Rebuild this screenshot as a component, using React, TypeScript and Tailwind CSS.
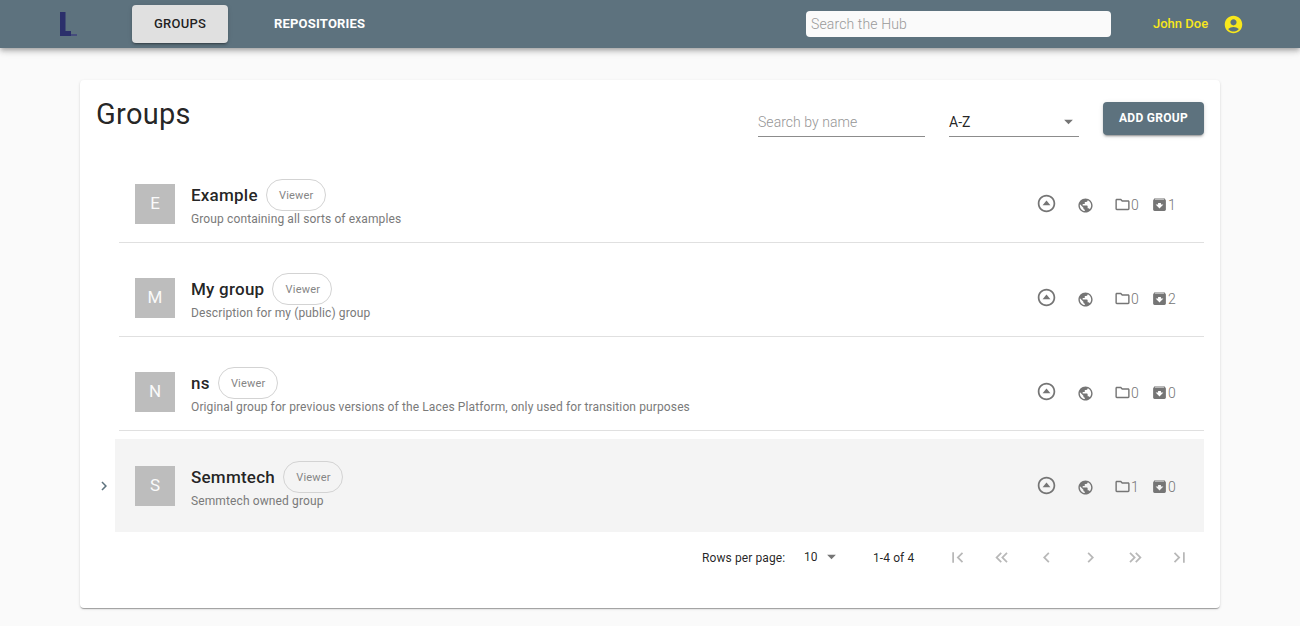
import { type ReactNode } from 'react';
import clsx from 'clsx';
import {
    MdAccountCircle,
    MdArchive,
    MdArrowDropDown,
    MdChevronLeft,
    MdChevronRight,
    MdFirstPage,
    MdKeyboardDoubleArrowLeft,
    MdKeyboardDoubleArrowRight,
    MdLastPage,
    MdPublic,
} from 'react-icons/md';

interface Group {
    name: string;
    description: string;
    subgroups: number;
    repositories: number;
    expandable?: boolean;
}

const groups: Group[] = [
    { name: 'Example', description: 'Group containing all sorts of examples', subgroups: 0, repositories: 1 },
    { name: 'My group', description: 'Description for my (public) group', subgroups: 0, repositories: 2 },
    {
        name: 'ns',
        description: 'Original group for previous versions of the Laces Platform, only used for transition purposes',
        subgroups: 0,
        repositories: 0,
    },
    { name: 'Semmtech', description: 'Semmtech owned group', subgroups: 1, repositories: 0, expandable: true },
];

function Logo() {
    return (
        <svg className="ml-[60px] h-6 w-[17px]" viewBox="0 0 17 24">
            <path d="M0 0h5.500v19h5.500v5H0z" fill="#2b2f6b" />
            <path d="M11 22h6v2h-6z" fill="#454c7c" />
        </svg>
    );
}

function Header() {
    return (
        <header className="relative flex h-12 items-center bg-[#5d727e] shadow-[0_2px_4px_-1px_rgba(0,0,0,0.2),0_4px_5px_0_rgba(0,0,0,0.14),0_1px_10px_0_rgba(0,0,0,0.12)]">
            <Logo />
            <button className="ml-[55px] h-[38px] w-24 rounded bg-[#e0e0e0] text-[13px] font-medium tracking-[0.25px] text-black/87 shadow-[0_3px_1px_-2px_rgba(0,0,0,0.2),0_2px_2px_0_rgba(0,0,0,0.14),0_1px_5px_0_rgba(0,0,0,0.12)]">
                GROUPS
            </button>
            <button className="ml-[46px] text-[13px] font-bold tracking-[0.2px] text-white">REPOSITORIES</button>
            <input
                className="ml-auto h-[26px] w-[305px] rounded bg-[#fafafa] px-[5px] text-sm font-light tracking-[0.13px] placeholder:text-[#999]"
                placeholder="Search the Hub"
            />
            <span className="ml-[42px] w-[70px] whitespace-nowrap text-[13px] font-medium text-[#f8e71c]">John Doe</span>
            <MdAccountCircle className="mr-14 h-[21px] w-[21px] text-[#f8e71c]" />
        </header>
    );
}

function Toolbar() {
    return (
        <div className="flex h-[70px] items-start pl-4 pr-4">
            <h1 className="mt-3.5 text-[29px] leading-10 tracking-[0.3px] text-black/87">Groups</h1>
            <input
                className="ml-auto mt-[27px] h-[30px] w-[167px] border-b border-[#8c8c8c] text-sm font-light tracking-[0.05px] placeholder:text-[#959595]"
                placeholder="Search by name"
            />
            <div className="ml-6 mt-[27px] flex h-[30px] w-[130px] items-center justify-between border-b border-[#8c8c8c] text-sm text-black/87">
                A-Z
                <MdArrowDropDown className="h-[21px] w-[21px] text-[#757575]" />
            </div>
            <button className="ml-6 mt-[22px] h-[33px] w-[101px] rounded bg-[#5d727e] pb-0.5 text-xs font-bold tracking-[0.3px] text-white shadow-[0_3px_1px_-2px_rgba(0,0,0,0.2),0_2px_2px_0_rgba(0,0,0,0.14),0_1px_5px_0_rgba(0,0,0,0.12)]">
                ADD GROUP
            </button>
        </div>
    );
}

function RoleIcon() {
    return (
        <svg className="mb-px h-[21px] w-[21px]" viewBox="0 0 24 24" fill="currentColor">
            <path d="M12 4c4.41 0 8 3.59 8 8s-3.59 8-8 8-8-3.59-8-8 3.59-8 8-8m0-2C6.48 2 2 6.48 2 12s4.48 10 10 10 10-4.48 10-10S17.52 2 12 2z" />
            <path d="M7.5 14l4.5-5.5 4.5 5.5z" />
        </svg>
    );
}

function FolderIcon() {
    return (
        <svg className="ml-5 h-[17px] w-[17px]" viewBox="0 0 24 24" fill="currentColor">
            <path d="M20 6h-8l-2-2H4c-1.1 0-1.99.9-1.99 2L2 18c0 1.1.9 2 2 2h16c1.1 0 2-.9 2-2V8c0-1.100-.9-2-2-2zm0 12H4V6h5.200l2 2H20v10z" />
        </svg>
    );
}

function GroupRow({ group }: { group: Group }) {
    return (
        <div className={clsx('flex', group.expandable && 'mt-[7px]')}>
            <div className="flex w-[35px] shrink-0 items-center justify-end">
                {group.expandable && <MdChevronRight className="mr-0.5 h-[18px] w-[18px] text-[#5d727e]" />}
            </div>
            <div
                className={clsx(
                    'mr-4 flex h-[93px] min-w-0 flex-1 items-start',
                    group.expandable ? 'bg-[#f4f4f4] pl-5 pt-[19px]' : 'ml-1 mb-px border-b border-[#e0e0e0] pl-4 pt-[26px]'
                )}
            >
                <div className="mt-2 flex h-10 w-10 items-center justify-center bg-[#bdbdbd] pb-px text-[17px] text-[#fafafa]">
                    {group.name[0].toUpperCase()}
                </div>
                <div className="ml-4">
                    <div className="mt-[3px] flex h-8 items-center gap-2">
                        <span className="pt-0.5 text-[17px] font-medium tracking-[0.23px] text-black/87">{group.name}</span>
                        <span className="flex h-8 w-[60px] items-center justify-center rounded-full border border-[#d3d3d3] pl-px pt-0.5 text-[11px] tracking-[0.2px] text-[#858585]">
                            Viewer
                        </span>
                    </div>
                    <p className="text-xs leading-4 tracking-[0.12px] text-[#7a7a7a]">{group.description}</p>
                </div>
                <div className="ml-auto mr-7 mt-[17px] flex h-[22px] items-center text-[#757575]">
                    <RoleIcon />
                    <MdPublic className="ml-5 mt-0.5 h-[17px] w-[17px]" />
                    <FolderIcon />
                    <span className="mt-0.5 w-2 text-sm font-light">{group.subgroups}</span>
                    <MdArchive className="ml-3 h-[17px] w-[17px]" />
                    <span className="mt-0.5 w-2 text-sm font-light">{group.repositories}</span>
                </div>
            </div>
        </div>
    );
}

function PageButton({ label, children }: { label: string; children: ReactNode }) {
    return (
        <button aria-label={label} className="flex w-[44.5px] justify-center text-[#b8b8b8]">
            {children}
        </button>
    );
}

function Pagination() {
    return (
        <div className="flex h-[51px] items-center justify-end pr-[18px] text-xs text-black/87">
            <span className="w-[102px] tracking-[0.1px]">Rows per page:</span>
            <span className="mb-0.5 flex w-[69px] items-center tracking-[0.1px]">
                10
                <MdArrowDropDown className="ml-[3px] h-[21px] w-[21px] text-[#757575]" />
            </span>
            <span className="w-[62px] tracking-[0.1px]">1-4 of 4</span>
            <PageButton label="First page"><MdFirstPage className="h-[21px] w-[21px]" /></PageButton>
            <PageButton label="Back five pages"><MdKeyboardDoubleArrowLeft className="h-[21px] w-[21px]" /></PageButton>
            <PageButton label="Previous page"><MdChevronLeft className="h-[21px] w-[21px]" /></PageButton>
            <PageButton label="Next page"><MdChevronRight className="h-[21px] w-[21px]" /></PageButton>
            <PageButton label="Forward five pages"><MdKeyboardDoubleArrowRight className="h-[21px] w-[21px]" /></PageButton>
            <PageButton label="Last page"><MdLastPage className="h-[21px] w-[21px]" /></PageButton>
        </div>
    );
}

export default function App() {
    return (
        <div className="h-[626px] bg-[#fafafa] font-['Roboto',sans-serif]">
            <Header />
            <main className="mx-20 mt-8 h-[528px] rounded bg-white shadow-[0_2px_1px_-1px_rgba(0,0,0,0.2),0_1px_1px_0_rgba(0,0,0,0.14),0_1px_3px_0_rgba(0,0,0,0.12)]">
                <Toolbar />
                {groups.map((group) => (
                    <GroupRow key={group.name} group={group} />
                ))}
                <Pagination />
            </main>
        </div>
    );
}
